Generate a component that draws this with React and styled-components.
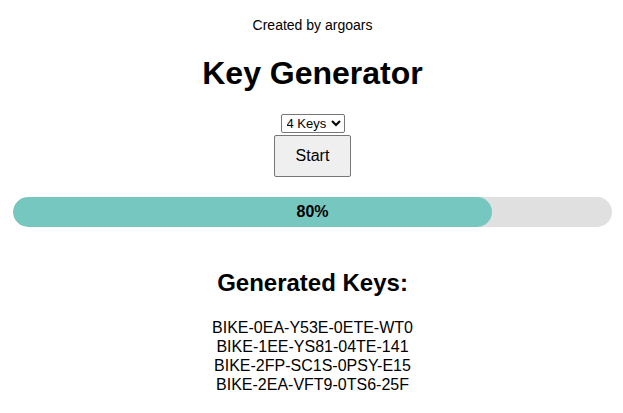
import React, { useState } from 'react';
import styled, { createGlobalStyle } from 'styled-components';

const GlobalStyle = createGlobalStyle`
  body {
    margin: 0;
    background: #ffffff;
    font-family: 'Liberation Sans', Arial, sans-serif;
    color: #000000;
  }
`;

const keys = [
  'BIKE-0EA-Y53E-0ETE-WT0',
  'BIKE-1EE-YS81-04TE-141',
  'BIKE-2FP-SC1S-0PSY-E15',
  'BIKE-2EA-VFT9-0TS6-25F',
];

export default function App() {
  const [count, setCount] = useState('4');
  const progress = 80;

  return (
    <Page>
      <GlobalStyle />
      <Credit>Created by argoars</Credit>
      <Title>Key Generator</Title>
      <Controls>
        <Select value={count} onChange={(e) => setCount(e.target.value)}>
          <option value="1">1 Key</option>
          <option value="2">2 Keys</option>
          <option value="3">3 Keys</option>
          <option value="4">4 Keys</option>
        </Select>
        <StartButton>Start</StartButton>
      </Controls>
      <Track>
        <Fill style={{ width: `${progress}%` }} />
        <Percent>{progress}%</Percent>
      </Track>
      <SubTitle>Generated Keys:</SubTitle>
      <KeyList>
        {keys.map((key) => (
          <KeyItem key={key}>{key}</KeyItem>
        ))}
      </KeyList>
    </Page>
  );
}

const Page = styled.div`
  display: flex;
  flex-direction: column;
  align-items: center;
  padding: 17px 11px 0 13px;
  text-align: center;
`;

const Credit = styled.p`
  margin: 0;
  font-size: 14px;
  line-height: 16px;
`;

const Title = styled.h1`
  margin: 22px 0 0;
  font-size: 32px;
  font-weight: 700;
  line-height: 37px;
`;

const Controls = styled.div`
  display: flex;
  flex-direction: column;
  align-items: center;
  margin-top: 22px;
  gap: 2px;
`;

const Select = styled.select`
  font-family: 'Liberation Sans', Arial, sans-serif;
  font-size: 13px;
  height: 19px;
  padding: 0 1px;
  border: 1px solid #767676;
  border-radius: 2px;
  background: #ffffff;
`;

const StartButton = styled.button`
  width: 77px;
  height: 42px;
  font-family: 'Liberation Sans', Arial, sans-serif;
  font-size: 16px;
  background: #efefef;
  border: 1px solid #767676;
  border-radius: 2px;
  cursor: pointer;
`;

const Track = styled.div`
  position: relative;
  align-self: stretch;
  height: 30px;
  margin-top: 20px;
  border-radius: 15px;
  background: #e0e0e0;
  overflow: hidden;
`;

const Fill = styled.div`
  height: 100%;
  border-radius: 15px;
  background: #76c7c0;
`;

const Percent = styled.span`
  position: absolute;
  inset: 0;
  display: flex;
  align-items: center;
  justify-content: center;
  font-size: 16px;
  font-weight: 700;
`;

const SubTitle = styled.h2`
  margin: 42px 0 0;
  font-size: 24px;
  font-weight: 700;
  line-height: 28px;
`;

const KeyList = styled.div`
  display: flex;
  flex-direction: column;
  margin-top: 21px;
`;

const KeyItem = styled.div`
  font-size: 16px;
  line-height: 19px;
`;
